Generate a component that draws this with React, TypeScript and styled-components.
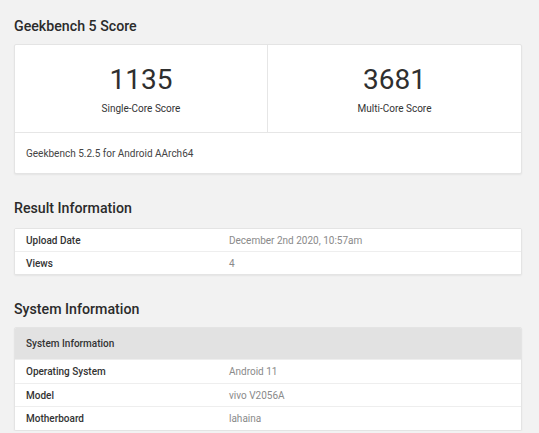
import React from "react";
import styled, { createGlobalStyle } from "styled-components";

const Global = createGlobalStyle`
  html, body { margin: 0; padding: 0; background: #f2f2f2; }
  body { font-family: Roboto, "Noto Sans", Arial, sans-serif; color: #333; }
`;

const Page = styled.div`
  padding: 16px 17px 0 14px;
  display: flex;
  flex-direction: column;
`;

const SectionTitle = styled.h2<{ $top?: number }>`
  margin: ${(p) => p.$top ?? 0}px 0 0 0;
  font-size: 14.2px;
  font-weight: 500;
  line-height: 20px;
  color: #2b2b2b;
`;

const Card = styled.div<{ $top?: number }>`
  margin-top: ${(p) => p.$top ?? 8}px;
  background: #fff;
  border: 1px solid #e4e4e4;
  border-radius: 2px;
  box-shadow: 0 1px 2px rgba(0, 0, 0, 0.06);
  overflow: hidden;
`;

const ScoreRow = styled.div`
  display: grid;
  grid-template-columns: 1fr 1fr;
  border-bottom: 1px solid #e6e6e6;
`;

const ScoreCell = styled.div<{ $divider?: boolean }>`
  height: 87px;
  display: flex;
  flex-direction: column;
  align-items: center;
  padding-top: 19px;
  box-sizing: border-box;
  border-right: ${(p) => (p.$divider ? "1px solid #e6e6e6" : "none")};
`;

const ScoreValue = styled.div`
  font-size: 28px;
  line-height: 32px;
  font-weight: 400;
  color: #2f2f2f;
`;

const ScoreLabel = styled.div`
  margin-top: 6px;
  font-size: 10px;
  line-height: 14px;
  color: #333;
`;

const Footer = styled.div`
  height: 40px;
  display: flex;
  align-items: center;
  padding-left: 11px;
  font-size: 10px;
  color: #444;
`;

const Row = styled.div<{ $head?: boolean; $h?: number }>`
  box-sizing: border-box;
  display: grid;
  grid-template-columns: 203px 1fr;
  align-items: center;
  height: ${(p) => p.$h ?? 23}px;
  padding-left: 11px;
  background: ${(p) => (p.$head ? "#e2e2e2" : "#fff")};
  border-top: 1px solid #eeeeee;
  &:first-child { border-top: none; }
  font-size: 10px;
`;

const Label = styled.div`
  font-weight: 500;
  color: #333;
`;

const Value = styled.div`
  color: #8a8a8a;
`;

export default function App() {
  return (
    <>
      <Global />
      <Page>
        <SectionTitle $top={0}>Geekbench 5 Score</SectionTitle>
        <Card $top={8}>
          <ScoreRow>
            <ScoreCell $divider>
              <ScoreValue>1135</ScoreValue>
              <ScoreLabel>Single-Core Score</ScoreLabel>
            </ScoreCell>
            <ScoreCell>
              <ScoreValue>3681</ScoreValue>
              <ScoreLabel>Multi-Core Score</ScoreLabel>
            </ScoreCell>
          </ScoreRow>
          <Footer>Geekbench 5.2.5 for Android AArch64</Footer>
        </Card>

        <SectionTitle $top={24}>Result Information</SectionTitle>
        <Card $top={10}>
          <Row $h={22}>
            <Label>Upload Date</Label>
            <Value>December 2nd 2020, 10:57am</Value>
          </Row>
          <Row $h={23}>
            <Label>Views</Label>
            <Value>4</Value>
          </Row>
        </Card>

        <SectionTitle $top={24}>System Information</SectionTitle>
        <Card $top={8}>
          <Row $head $h={31}>
            <Label>System Information</Label>
          </Row>
          <Row $h={24}>
            <Label>Operating System</Label>
            <Value>Android 11</Value>
          </Row>
          <Row $h={23}>
            <Label>Model</Label>
            <Value>vivo V2056A</Value>
          </Row>
          <Row $h={24}>
            <Label>Motherboard</Label>
            <Value>lahaina</Value>
          </Row>
        </Card>
      </Page>
    </>
  );
}
